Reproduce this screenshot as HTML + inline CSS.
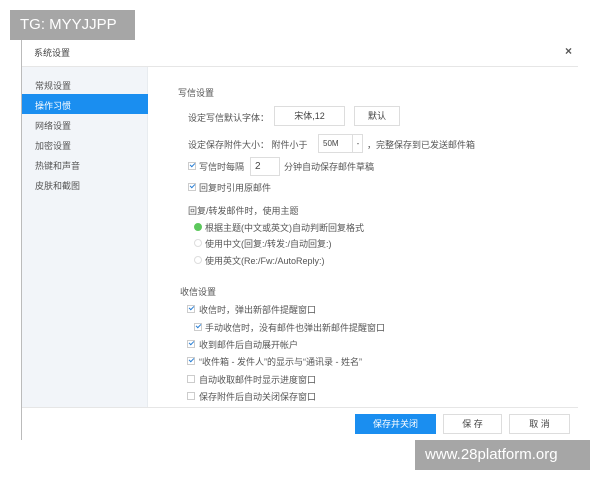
<!DOCTYPE html><html><head><meta charset="utf-8"><style>
*{margin:0;padding:0;box-sizing:border-box}
body{width:600px;height:480px;background:#fff;position:relative;overflow:hidden;font-family:"Liberation Sans","Noto Sans CJK SC",sans-serif;font-size:9px;color:#555}
.a{position:absolute;white-space:nowrap}
.cb{position:absolute;width:8px;height:8px;border:1px solid #ccc;background:#fff}
.ck::after{content:"";position:absolute;left:1px;top:0px;width:4px;height:2px;border-left:1.3px solid #2a7fd4;border-bottom:1.3px solid #2a7fd4;transform:rotate(-45deg)}
.rd{position:absolute;width:8px;height:8px;border-radius:50%;border:1px solid #ddd;background:#fff}
.btn{position:absolute;border:1px solid #ddd;background:#fff;text-align:center;color:#444}
</style></head><body>
<div class="a" style="left:21px;top:40px;width:1px;height:400px;background:#bbb"></div>
<div class="a" style="left:22px;top:66px;width:556px;height:1px;background:#e6e6e6"></div>
<div class="a" style="left:34px;top:46px;color:#444">系统设置</div>
<div class="a" style="left:565px;top:44px;font-size:12px;font-weight:bold;color:#555">×</div>
<div class="a" style="left:22px;top:67px;width:126px;height:340px;background:#f2f5f9;border-right:1px solid #e8ecf0"></div>
<div class="a" style="left:22px;top:94px;width:126px;height:20px;background:#1a8ef0"></div>
<div class="a" style="left:35px;top:79px">常规设置</div>
<div class="a" style="left:35px;top:99px;color:#fff">操作习惯</div>
<div class="a" style="left:35px;top:119px">网络设置</div>
<div class="a" style="left:35px;top:139px">加密设置</div>
<div class="a" style="left:35px;top:159px">热键和声音</div>
<div class="a" style="left:35px;top:179px">皮肤和截图</div>
<div class="a" style="left:22px;top:407px;width:556px;height:1px;background:#e6e6e6"></div>

<div class="a" style="left:178px;top:86px">写信设置</div>
<div class="a" style="left:188px;top:111px">设定写信默认字体：</div>
<div class="btn" style="left:274px;top:106px;width:71px;height:20px;line-height:18px">宋体,12</div>
<div class="btn" style="left:354px;top:106px;width:46px;height:20px;line-height:18px">默认</div>
<div class="a" style="left:188px;top:138px">设定保存附件大小：&nbsp;附件小于</div>
<div class="btn" style="left:318px;top:134px;width:45px;height:19px;line-height:17px;text-align:left;padding-left:4px;font-size:8px">50M<span style="position:absolute;left:33px;top:0;width:11px;height:17px;border-left:1px solid #ddd;text-align:center">-</span></div>
<div class="a" style="left:367px;top:138px">，完整保存到已发送邮件箱</div>
<div class="cb ck" style="left:188px;top:162px"></div>
<div class="a" style="left:199px;top:160px">写信时每隔</div>
<div class="btn" style="left:250px;top:157px;width:30px;height:19px;line-height:17px;text-align:left;padding-left:4px;font-size:10px">2</div>
<div class="a" style="left:284px;top:160px">分钟自动保存邮件草稿</div>
<div class="cb ck" style="left:188px;top:183px"></div>
<div class="a" style="left:199px;top:181px">回复时引用原邮件</div>
<div class="a" style="left:188px;top:204px">回复/转发邮件时，使用主题</div>
<div class="rd" style="left:194px;top:223px;background:#5cc85c;border-color:#5cc85c"></div>
<div class="a" style="left:205px;top:221px">根据主题(中文或英文)自动判断回复格式</div>
<div class="rd" style="left:194px;top:239px"></div>
<div class="a" style="left:205px;top:237px">使用中文(回复:/转发:/自动回复:)</div>
<div class="rd" style="left:194px;top:256px"></div>
<div class="a" style="left:205px;top:254px">使用英文(Re:/Fw:/AutoReply:)</div>

<div class="a" style="left:180px;top:285px">收信设置</div>
<div class="cb ck" style="left:187px;top:305px"></div><div class="a" style="left:199px;top:303px">收信时，弹出新部件提醒窗口</div>
<div class="cb ck" style="left:194px;top:323px"></div><div class="a" style="left:205px;top:321px">手动收信时，没有邮件也弹出新邮件提醒窗口</div>
<div class="cb ck" style="left:187px;top:340px"></div><div class="a" style="left:199px;top:338px">收到邮件后自动展开帐户</div>
<div class="cb ck" style="left:187px;top:357px"></div><div class="a" style="left:199px;top:355px">“收件箱 - 发件人”的显示与“通讯录 - 姓名”</div>
<div class="cb" style="left:187px;top:375px"></div><div class="a" style="left:199px;top:373px">自动收取邮件时显示进度窗口</div>
<div class="cb" style="left:187px;top:392px"></div><div class="a" style="left:199px;top:390px">保存附件后自动关闭保存窗口</div>

<div class="btn" style="left:355px;top:414px;width:81px;height:20px;line-height:18px;background:#1a8ef0;border-color:#1a8ef0;color:#fff">保存并关闭</div>
<div class="btn" style="left:443px;top:414px;width:59px;height:20px;line-height:18px">保 存</div>
<div class="btn" style="left:509px;top:414px;width:61px;height:20px;line-height:18px">取 消</div>

<div class="a" style="left:10px;top:10px;width:125px;height:30px;background:#a6a6a6;color:#fff;font-size:15px;line-height:30px;padding-left:10px">TG: MYYJJPP</div>
<div class="a" style="left:415px;top:440px;width:175px;height:30px;background:#a6a6a6;color:#fff;font-size:15px;line-height:30px;padding-left:10px">www.28platform.org</div>
</body></html>
